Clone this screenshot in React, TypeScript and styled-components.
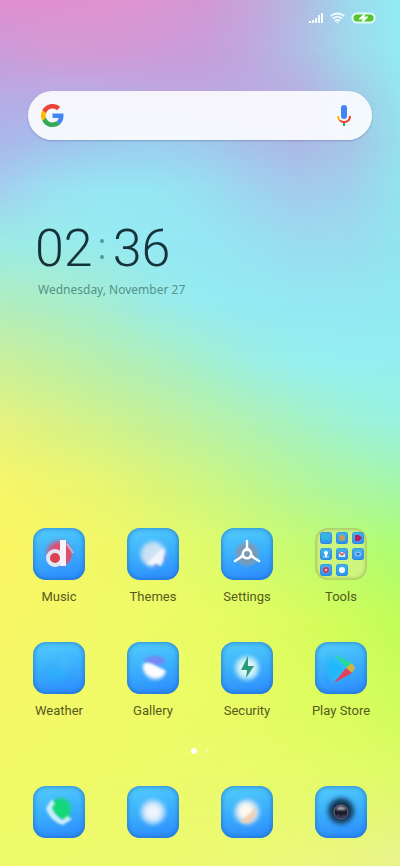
import React, { useId } from 'react';
import styled, { createGlobalStyle } from 'styled-components';

const GlobalStyle = createGlobalStyle`
  *, *::before, *::after { box-sizing: border-box; }
  html, body { margin: 0; padding: 0; }
  body { font-family: Roboto, "Liberation Sans", sans-serif; }
  button, input { font: inherit; color: inherit; }
`;

/* Wallpaper: each row is a horizontal gradient that fades in over the one above it. */
type Row = { y: number; colors: string[] };

const rows: Row[] = [
  { y: 0, colors: ['#e18fd0', '#e190d0', '#e093d0', '#dc94d1', '#d398d4', '#c6a5da', '#b3bae3', '#9cdaee', '#93edf3'] },
  { y: 6, colors: ['#cb9bd9', '#d29bd6', '#d29ad6', '#ce9bd8', '#c89dda', '#bfa8de', '#b0bde4', '#9fd8ec', '#94ebf2'] },
  { y: 11, colors: ['#b7abe5', '#b9abe5', '#b9abe4', '#bba9e2', '#bca8e1', '#bbaae1', '#b6b0e1', '#a5c8e7', '#94e5ee'] },
  { y: 16, colors: ['#acb5ea', '#a4c0ec', '#9cc8ee', '#9bccef', '#9fc9ed', '#a8beea', '#aeb7e5', '#a6c4e6', '#95e0ec'] },
  { y: 22, colors: ['#a2d0ef', '#9ae1f2', '#96e7f3', '#95e7f3', '#97e1f2', '#9dd4ef', '#a3cbec', '#9fd1ec', '#93e3ef'] },
  { y: 28, colors: ['#9cebe6', '#9aecea', '#97ebf0', '#95e9f4', '#95e7f4', '#97e2f2', '#9adcf0', '#99dcef', '#92e5f0'] },
  { y: 35, colors: ['#b0edbe', '#abedc6', '#a4edd2', '#9bece5', '#96ecf1', '#94eaf4', '#94e8f3', '#94e8f3', '#92e9f2'] },
  { y: 42, colors: ['#cbf09a', '#c2f0a1', '#b8efad', '#afefbb', '#a5efcc', '#9ceee0', '#96efee', '#94eff1', '#93eff0'] },
  { y: 49, colors: ['#e6f37e', '#dbf283', '#d1f28b', '#c6f196', '#bbf2a3', '#b0f2b2', '#a6f2c2', '#9ef2d3', '#9af2de'] },
  { y: 56, colors: ['#f7f669', '#f0f66c', '#e9f671', '#dcf578', '#cff681', '#c1f68b', '#b3f698', '#abf6a2', '#a4f6aa'] },
  { y: 63, colors: ['#fbf663', '#f7f765', '#f2f867', '#ebf96a', '#e0fb6c', '#d3fb6e', '#c6fb72', '#b9fc73', '#adfd74'] },
  { y: 72, colors: ['#f8f766', '#f5f866', '#f1f967', '#eefb66', '#eafb64', '#e4fc61', '#dafc5c', '#cffd59', '#c2fd57'] },
  { y: 81, colors: ['#f5f868', '#f3f968', '#f1fa67', '#eefb67', '#ebfc66', '#e7fc64', '#e0fc60', '#d9fd5d', '#cffd5a'] },
  { y: 90, colors: ['#f1fa68', '#f0fa68', '#effa69', '#eefa69', '#ebfa6c', '#e9fb6c', '#e6fb6a', '#e4fb69', '#dffa69'] },
  { y: 100, colors: ['#eefa6a', '#eefa6c', '#edfa6d', '#edfa6d', '#edf971', '#ecf976', '#ebf87c', '#eaf683', '#e9f38e'] },
];

const Screen = styled.div`
  position: relative;
  isolation: isolate;
  display: flex;
  flex-direction: column;
  min-height: 100vh;
  padding-bottom: 28px;
  overflow: hidden;
`;

const Wallpaper = styled.div`
  position: absolute;
  inset: 0;
  z-index: -1;
`;

const Band = styled.div<{ $colors: string[]; $from: number; $to: number }>`
  position: absolute;
  inset: 0;
  background: linear-gradient(90deg, ${(p) => p.$colors.join(', ')});
  ${(p) => p.$to > 0 && `mask-image: linear-gradient(180deg, transparent ${p.$from}%, #000 ${p.$to}%);`}
`;

const StatusBar = styled.header`
  display: flex;
  justify-content: flex-end;
  align-items: center;
  gap: 6px;
  height: 36px;
  padding-right: 24px;
`;

const SearchBar = styled.form`
  display: flex;
  align-items: center;
  height: 49px;
  margin: 55px 28px 0;
  padding: 0 16px 0 13px;
  border-radius: 25px;
  background: rgba(255, 255, 255, 0.88);
  box-shadow: 0 1px 2px rgba(70, 80, 130, 0.35);
`;

const SearchInput = styled.input`
  flex: 1;
  min-width: 0;
  height: 100%;
  padding: 0 12px;
  border: 0;
  outline: 0;
  background: transparent;
  font-size: 16px;
`;

const IconButton = styled.button`
  display: flex;
  padding: 0;
  border: 0;
  background: none;
`;

const ClockWidget = styled.section`
  margin: 80px 0 0 35px;
  color: #16323a;
`;

const Time = styled.time`
  display: flex;
  align-items: center;
  gap: 7px;
  height: 58px;
  font-size: 52px;
  font-weight: 300;
  line-height: 58px;
`;

const Colon = styled.span`
  display: flex;
  flex-direction: column;
  gap: 12px;
  padding: 0 2px 0 0;

  &::before,
  &::after {
    content: '';
    width: 4px;
    height: 4px;
    border-radius: 50%;
    background: #55999a;
  }
`;

const DateText = styled.p`
  margin: 4px 0 0 3px;
  font-family: "Noto Sans", Roboto, sans-serif;
  font-size: 12px;
  line-height: 16px;
  color: #55928a;
`;

const AppGrid = styled.main`
  display: grid;
  grid-template-columns: repeat(4, 1fr);
  row-gap: 35px;
  margin-top: auto;
  padding: 0 12px;
`;

const AppButton = styled.button`
  display: flex;
  flex-direction: column;
  align-items: center;
  gap: 7px;
  padding: 0;
  border: 0;
  background: none;
  color: #565a1c;
  font-size: 13px;
  line-height: 20px;
  white-space: nowrap;
`;

const Tile = styled.span`
  display: block;
  width: 52px;
  height: 52px;
  border-radius: 13px;
  overflow: hidden;
  background: linear-gradient(170deg, #54cdfb 0%, #3cb2fc 45%, #2b88fd 100%);
  box-shadow: inset 0 0 4px 1px rgba(20, 90, 170, 0.55);

  svg { display: block; }
`;

const Folder = styled.span`
  display: grid;
  grid-template-columns: repeat(3, 12px);
  grid-auto-rows: 12px;
  place-content: start;
  gap: 4px;
  width: 52px;
  height: 52px;
  padding: 4px 0 0 5px;
  border-radius: 13px;
  background: rgba(215, 240, 140, 0.6);
  box-shadow: inset 0 0 3px 2px rgba(130, 155, 70, 0.45);
`;

const MiniTile = styled.span`
  border-radius: 3px;
  background: linear-gradient(170deg, #45b8ec, #2f8ff0);
  box-shadow: inset 0 0 1px 1px rgba(20, 100, 180, 0.25);

  svg { display: block; }
`;

const Pager = styled.nav`
  display: flex;
  justify-content: center;
  align-items: center;
  gap: 8px;
  margin-top: 27px;
  height: 6px;
`;

const Dot = styled.button<{ $active?: boolean }>`
  width: ${(p) => (p.$active ? 6 : 4)}px;
  height: ${(p) => (p.$active ? 6 : 4)}px;
  padding: 0;
  border: 0;
  border-radius: 50%;
  background: rgba(255, 255, 255, ${(p) => (p.$active ? 0.95 : 0.3)});
`;

const Dock = styled.footer`
  display: grid;
  grid-template-columns: repeat(4, 1fr);
  margin-top: 32px;
  padding: 0 12px;
`;

function Glyph({ children }: { children: (id: string) => React.ReactNode }) {
  const id = useId();
  return (
    <svg width="52" height="52" viewBox="0 0 52 52" aria-hidden="true">
      {children(id)}
    </svg>
  );
}

function Blur({ id, d }: { id: string; d: number }) {
  return (
    <filter id={id} x="-60%" y="-60%" width="220%" height="220%">
      <feGaussianBlur stdDeviation={d} />
    </filter>
  );
}

const MusicIcon = () => (
  <Glyph>
    {(id) => (
      <>
        <defs>
          <Blur id={`${id}a`} d={2} />
          <Blur id={`${id}b`} d={0.5} />
          <clipPath id={`${id}c`}><path d="M0 0h29v52H0z" /></clipPath>
        </defs>
        <circle cx="26" cy="25" r="12" fill="#d6557a" filter={`url(#${id}a)`} />
        <path d="M32 16c6 3 7 7 6.500 12-.5 4-3 7-6.500 9z" fill="#e34d68" opacity=".8" filter={`url(#${id}b)`} />
        <path d="M20 20l7-5v6z" fill="#e2485f" opacity=".7" filter={`url(#${id}b)`} />
        <g filter={`url(#${id}b)`}>
          <circle cx="22" cy="30" r="7" fill="#e0404f" stroke="#e6eefb" strokeWidth="4" opacity=".95" clipPath={`url(#${id}c)`} />
          <path d="M27 12h6v26h-6z" fill="#f6f2fb" />
        </g>
        <path d="M34 16l6 9" stroke="#e6d5f0" strokeWidth="2" opacity=".6" filter={`url(#${id}b)`} />
      </>
    )}
  </Glyph>
);

const ThemesIcon = () => (
  <Glyph>
    {(id) => (
      <>
        <defs>
          <Blur id={`${id}a`} d={2.200} />
          <Blur id={`${id}b`} d={0.900} />
          <linearGradient id={`${id}g`} x1="0" y1="0" x2="1" y2="1">
            <stop offset="0" stopColor="#b9daf1" />
            <stop offset="1" stopColor="#e4ebf7" />
          </linearGradient>
        </defs>
        <circle cx="26" cy="26" r="12.500" fill={`url(#${id}g)`} filter={`url(#${id}a)`} />
        <path d="M36 20L19 36l6 1 4-2 5 3 1-5 4-3-3-4 2-3z" fill="#f4f5fc" filter={`url(#${id}b)`} opacity=".9" />
        <path d="M26 40l3-4 4 4zM36 30l4-4v9z" fill="#5f83e6" opacity=".8" filter={`url(#${id}b)`} />
      </>
    )}
  </Glyph>
);

const SettingsIcon = () => (
  <Glyph>
    {(id) => (
      <>
        <defs><Blur id={`${id}a`} d={1.2} /><Blur id={`${id}b`} d={0.4} /></defs>
        <circle cx="26" cy="26" r="12" fill="#7b9fbe" opacity=".85" filter={`url(#${id}a)`} />
        <circle cx="26" cy="26" r="9" fill="#7c93ab" opacity=".6" filter={`url(#${id}a)`} />
        <g filter={`url(#${id}b)`} stroke="#fff" fill="none">
          <path d="M26 13v9M22 28l-8 5M30 28l8 5" strokeWidth="2.400" strokeLinecap="round" />
          <path d="M23 22l3-2 3 2M21 27l-2 3M31 27l2 3" strokeWidth="2" />
          <circle cx="26" cy="26" r="4.200" strokeWidth="2.600" />
        </g>
      </>
    )}
  </Glyph>
);

const WeatherIcon = () => (
  <Glyph>
    {(id) => (
      <>
        <defs><Blur id={`${id}a`} d={3} /></defs>
        <ellipse cx="24" cy="31" rx="10" ry="6" fill="#2bb2fb" opacity=".7" filter={`url(#${id}a)`} />
        <circle cx="31" cy="22" r="4" fill="#5cc0fb" opacity=".6" filter={`url(#${id}a)`} />
      </>
    )}
  </Glyph>
);

const GalleryIcon = () => (
  <Glyph>
    {(id) => (
      <>
        <defs><Blur id={`${id}a`} d={1.8} /><Blur id={`${id}b`} d={0.9} /></defs>
        <ellipse cx="28" cy="19" rx="10" ry="5" fill="#7587f6" filter={`url(#${id}a)`} />
        <path d="M15 24c1-4 7-4 12-1 6 3 10 4 12 6 0 6-6 9-11 9s-12-4-13-14z" fill="#b9d8fb" filter={`url(#${id}a)`} />
        <path d="M17 24c0-3 4-3 9-1l12 6c-2 5-6 7-11 6-6-1-10-5-10-11z" fill="#fdfdff" filter={`url(#${id}b)`} />
      </>
    )}
  </Glyph>
);

const SecurityIcon = () => (
  <Glyph>
    {(id) => (
      <>
        <defs><Blur id={`${id}a`} d={2} /></defs>
        <circle cx="26" cy="26" r="12" fill="#b4e9f6" filter={`url(#${id}a)`} />
        <circle cx="26" cy="26" r="7" fill="#effaf8" filter={`url(#${id}a)`} />
        <path d="M27 14L20 28h6l-1 8 8-12h-6z" fill="#2a9c78" />
      </>
    )}
  </Glyph>
);

const PlayIcon = () => (
  <Glyph>
    {(id) => (
      <>
        <defs><Blur id={`${id}a`} d={2.200} /><Blur id={`${id}b`} d={0.600} /></defs>
        <path d="M15 16L20 11 42 26 20 41 15 38z" fill="#35c3f4" opacity=".6" filter={`url(#${id}a)`} />
        <path d="M13 15l17 11-16 12z" fill="#14b8fb" opacity=".8" filter={`url(#${id}a)`} />
        <path d="M19 12l19 10-6 4z" fill="#23dc94" filter={`url(#${id}b)`} />
        <path d="M31 26l6-5 3 5-3 5z" fill="#d6b13e" filter={`url(#${id}b)`} />
        <path d="M19 41l12-15 6 5z" fill="#e33f5c" filter={`url(#${id}b)`} />
      </>
    )}
  </Glyph>
);

const PhoneIcon = () => (
  <Glyph>
    {(id) => (
      <>
        <defs><Blur id={`${id}a`} d={1.800} /><Blur id={`${id}b`} d={0.800} /></defs>
        <circle cx="28" cy="22" r="10" fill="#12d67c" filter={`url(#${id}a)`} />
        <path d="M21 16l3 6 8 9 5-1" stroke="#14d873" strokeWidth="6" fill="none" filter={`url(#${id}b)`} />
        <path d="M19 13l-6 9c2 8 9 15 17 17l9-6-5-3-4 4c-5-2-10-8-11-13l3-3z" fill="#c9effa" filter={`url(#${id}b)`} />
      </>
    )}
  </Glyph>
);

const MessagesIcon = () => (
  <Glyph>
    {(id) => (
      <>
        <defs><Blur id={`${id}a`} d={2.200} /></defs>
        <circle cx="26" cy="26" r="12.500" fill="#b0dbfa" filter={`url(#${id}a)`} />
        <circle cx="26" cy="26" r="8" fill="#eef5fc" filter={`url(#${id}a)`} />
      </>
    )}
  </Glyph>
);

const BrowserIcon = () => (
  <Glyph>
    {(id) => (
      <>
        <defs><Blur id={`${id}a`} d={2.200} /><Blur id={`${id}b`} d={0.900} /></defs>
        <circle cx="26" cy="26" r="12.500" fill="#bcdcf2" filter={`url(#${id}a)`} />
        <circle cx="25" cy="25" r="8" fill="#fffaf2" filter={`url(#${id}a)`} />
        <path d="M35 22c0 7-3 14-8 15h-6l-1-2z" fill="#f7cda6" opacity=".85" filter={`url(#${id}b)`} />
      </>
    )}
  </Glyph>
);

const CameraIcon = () => (
  <Glyph>
    {(id) => (
      <>
        <defs><Blur id={`${id}a`} d={2} /><Blur id={`${id}b`} d={0.800} /></defs>
        <circle cx="26" cy="25" r="13.500" fill="#1d5580" filter={`url(#${id}a)`} />
        <circle cx="26" cy="25" r="9" fill="#102032" filter={`url(#${id}a)`} />
        <circle cx="26" cy="26" r="7" fill="#1c1a2a" stroke="#6e6980" strokeWidth="1" />
        <path d="M21 24c1-5 9-5 10 0z" fill="#b5b2c0" filter={`url(#${id}b)`} />
        <path d="M22 29c2 3 6 3 8 0" fill="none" stroke="#5d5690" strokeWidth="1.500" filter={`url(#${id}b)`} />
      </>
    )}
  </Glyph>
);

const MiniGlyph = ({ children }: { children?: React.ReactNode }) => (
  <MiniTile>
    <svg width="12" height="12" viewBox="0 0 12 12" aria-hidden="true">{children}</svg>
  </MiniTile>
);

const ToolsFolder = () => (
  <Folder>
    <MiniGlyph><rect x="2" y="3" width="8" height="5" rx="2" fill="#2cc2d4" opacity=".6" /></MiniGlyph>
    <MiniGlyph><circle cx="6" cy="6" r="3" fill="#c99c53" /></MiniGlyph>
    <MiniGlyph><path d="M3 3h4l3 3-3 3H3z" fill="#b81e5c" /></MiniGlyph>
    <MiniGlyph><circle cx="6" cy="5" r="2" fill="#fff" /><path d="M5 6h2v3H5z" fill="#fff" /><path d="M3 9h6" stroke="#cbe5fb" /></MiniGlyph>
    <MiniGlyph><path d="M3 4h6v5H3z" fill="#dcecfa" /><path d="M3 4l3 3 3-3" stroke="#e0525c" strokeWidth="1.500" fill="none" /></MiniGlyph>
    <MiniGlyph><ellipse cx="6" cy="6" rx="3" ry="2" fill="none" stroke="#a0cbec" /><circle cx="6" cy="6" r="1" fill="#4870b8" /></MiniGlyph>
    <MiniGlyph><circle cx="6" cy="6" r="2" fill="#fff" stroke="#d43a54" strokeWidth="2" /></MiniGlyph>
    <MiniGlyph><circle cx="6" cy="6" r="3" fill="#fff" /></MiniGlyph>
  </Folder>
);

const SignalIcon = () => (
  <svg width="15" height="12" viewBox="0 0 15 12" role="img" aria-label="Signal strength">
    <path d="M0 9h2v2H0zM3 8h2v3H3zM6 6h2v5H6zM9 3h2v8H9zM12 1h2v10h-2z" fill="#f4fbff" />
  </svg>
);

const WifiIcon = () => (
  <svg width="15" height="12" viewBox="0 0 15 12" role="img" aria-label="Wi-Fi">
    <g fill="none" stroke="#f4fbff" strokeWidth="1.800">
      <path d="M.7 4.200c4-3.600 9.600-3.600 13.600 0" />
      <path d="M2.900 6.600c2.700-2.400 6.500-2.400 9.200 0" />
      <path d="M5 8.900c1.500-1.300 3.500-1.300 5 0" />
    </g>
    <path d="M6 10c1-.8 2-.8 3 0l-1.500 1.500z" fill="#f4fbff" />
  </svg>
);

const BatteryIcon = () => (
  <svg width="25" height="12" viewBox="0 0 25 12" role="img" aria-label="Battery charging">
    <rect x="1" y="1" width="23" height="10" rx="5" fill="#d3f5ec" stroke="#e6fbf8" strokeWidth="1.200" />
    <rect x="2.500" y="2.500" width="20" height="7" rx="3.500" fill="#5ac42f" />
    <path d="M14 1L8 7h4l-1 4 6-6h-4z" fill="#f4fff4" stroke="#e9fce9" strokeWidth="1" />
  </svg>
);

const GoogleLogo = () => (
  <svg width="23" height="23" viewBox="0 0 48 48" role="img" aria-label="Google">
    <path fill="#EA4335" d="M24 9.500c3.540 0 6.710 1.220 9.210 3.600l6.850-6.850C35.900 2.380 30.470 0 24 0 14.620 0 6.510 5.380 2.560 13.220l7.980 6.190C12.430 13.720 17.740 9.500 24 9.500z" />
    <path fill="#4285F4" d="M46.980 24.550c0-1.570-.15-3.090-.38-4.550H24v9.020h12.940c-.58 2.960-2.260 5.480-4.780 7.180l7.730 6c4.510-4.180 7.090-10.360 7.090-17.650z" />
    <path fill="#FBBC05" d="M10.530 28.590c-.48-1.450-.76-2.990-.76-4.590s.27-3.140.76-4.590l-7.980-6.190C.92 16.460 0 20.120 0 24c0 3.880.92 7.540 2.560 10.780z" />
    <path fill="#34A853" d="M24 48c6.480 0 11.930-2.130 15.890-5.810l-7.730-6c-2.150 1.450-4.920 2.300-8.160 2.300-6.260 0-11.570-4.220-13.470-9.910l-7.980 6.190C6.510 42.620 14.620 48 24 48z" />
  </svg>
);

const MicIcon = () => (
  <svg width="24" height="24" viewBox="0 0 24 24" aria-hidden="true">
    <rect x="9" y="1" width="6" height="14" rx="3" fill="#4285f4" />
    <path d="M11 18h2v4h-2z" fill="#34a853" />
    <g fill="none" strokeWidth="2">
      <path d="M6 12c0 2 .6 3.300 1.800 4.400" stroke="#fbbc05" />
      <path d="M7.800 16.400C10.500 19 18 18.800 18 12" stroke="#ea4335" />
    </g>
  </svg>
);

const apps = [
  { name: 'Music', Icon: MusicIcon },
  { name: 'Themes', Icon: ThemesIcon },
  { name: 'Settings', Icon: SettingsIcon },
  { name: 'Tools', Icon: ToolsFolder, folder: true },
  { name: 'Weather', Icon: WeatherIcon },
  { name: 'Gallery', Icon: GalleryIcon },
  { name: 'Security', Icon: SecurityIcon },
  { name: 'Play Store', Icon: PlayIcon },
];

const dockApps = [
  { name: 'Phone', Icon: PhoneIcon },
  { name: 'Messages', Icon: MessagesIcon },
  { name: 'Browser', Icon: BrowserIcon },
  { name: 'Camera', Icon: CameraIcon },
];

export default function App() {
  return (
    <>
      <GlobalStyle />
      <Screen>
        <Wallpaper>
          {rows.map((row, i) => (
            <Band key={row.y} $colors={row.colors} $from={i ? rows[i - 1].y : 0} $to={row.y} />
          ))}
        </Wallpaper>
        <StatusBar>
          <SignalIcon />
          <WifiIcon />
          <BatteryIcon />
        </StatusBar>
        <SearchBar role="search">
          <GoogleLogo />
          <SearchInput type="search" aria-label="Search" />
          <IconButton type="button" aria-label="Voice search"><MicIcon /></IconButton>
        </SearchBar>
        <ClockWidget>
          <Time dateTime="02:36">
            <span>02</span>
            <Colon />
            <span>36</span>
          </Time>
          <DateText>Wednesday, November 27</DateText>
        </ClockWidget>
        <AppGrid>
          {apps.map(({ name, Icon, folder }) => (
            <AppButton key={name} type="button">
              {folder ? <Icon /> : <Tile><Icon /></Tile>}
              {name}
            </AppButton>
          ))}
        </AppGrid>
        <Pager aria-label="Home pages">
          <Dot type="button" aria-label="Page 1" $active />
          <Dot type="button" aria-label="Page 2" />
        </Pager>
        <Dock>
          {dockApps.map(({ name, Icon }) => (
            <AppButton key={name} type="button" aria-label={name}>
              <Tile><Icon /></Tile>
            </AppButton>
          ))}
        </Dock>
      </Screen>
    </>
  );
}
